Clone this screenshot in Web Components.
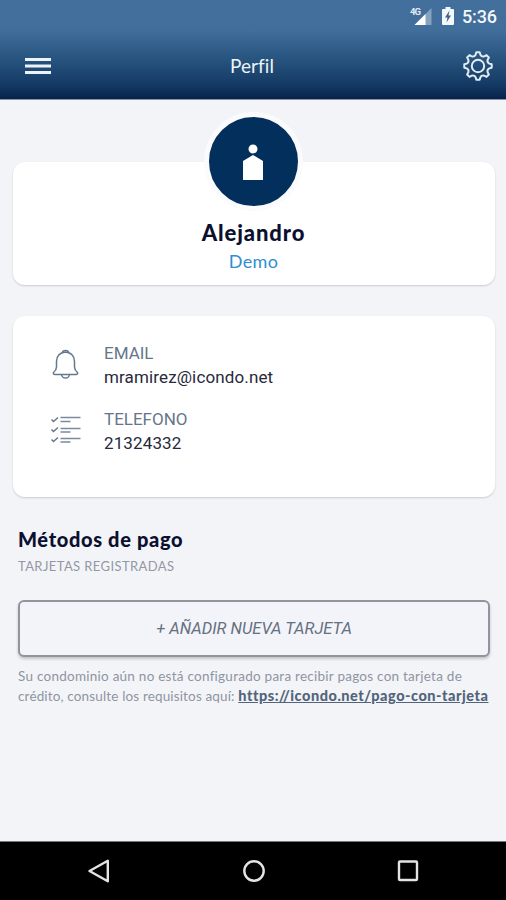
<!DOCTYPE html>
<html lang="es">
<head>
<meta charset="utf-8">
<title>Perfil</title>
<style>
  body {
    margin: 0;
    background: #f3f4f8;
    font-family: Lato, "Liberation Sans", sans-serif;
  }
</style>
</head>
<body>
<profile-page></profile-page>

<template id="status-bar">
  <style>
    :host {
      display: flex;
      justify-content: flex-end;
      height: 32px;
      padding-right: 9px;
      color: #f4f7fa;
      font: 500 18px/33px Roboto, sans-serif;
    }
    svg { display: block; flex: none; }
    .signal { margin-right: 9px; }
    .battery { margin-right: 8px; }
    .time { letter-spacing: -.1px; }
  </style>
  <svg class="signal" width="24" height="32" viewBox="0 0 24 32">
    <path d="M22.500 8V25H5.500z" fill="#85a2be"/>
    <path d="M16.500 14V25H5.500z" fill="#fff"/>
    <text x="1" y="15" font-family="Roboto" font-size="9.500" font-weight="700" fill="#e4ebf2" textLength="11">4G</text>
  </svg>
  <svg class="battery" width="12" height="32" viewBox="0 0 12 32">
    <path d="M3.500 7h5v2H11q1 0 1 1v14q0 1-1 1H1q-1 0-1-1V10q0-1 1-1h2.500z" fill="#f4f7fa"/>
    <path d="M7.500 10.500 3 17.500h2.500L4.500 22.500 9 15.500H6.500z" fill="#386490"/>
  </svg>
  <span class="time">5:36</span>
</template>

<template id="app-header">
  <style>
    :host {
      display: block;
      height: 100px;
      box-sizing: border-box;
      border-bottom: 1px solid #8e8ea6;
      background: linear-gradient(#426f9c 0, #416e9b 30px, #285580 58px, #143b65 84px, #0a2850 96px, #07214a 99px);
    }
    .bar {
      display: grid;
      grid-template-columns: 1fr auto 1fr;
      align-items: center;
      height: 68px;
      padding: 0 13px 0 25px;
      box-sizing: border-box;
    }
    .gear { justify-self: end; }
    svg { display: block; }
    h1 {
      margin: 0 14px 0 0;
      color: #eef3f8;
      font-size: 19px;
      font-weight: 400;
      line-height: 24px;
      letter-spacing: .1px;
    }
    .gear path, .gear circle { fill: none; stroke: #e3ebf2; stroke-width: 2; stroke-linejoin: round; }
  </style>
  <status-bar></status-bar>
  <div class="bar">
    <svg width="26" height="18" viewBox="0 0 26 18">
      <path d="M0 2.500h26M0 9h26M0 15.500h26" stroke="#eef2fa" stroke-width="2.800"/>
    </svg>
    <h1>Perfil</h1>
    <svg class="gear" width="30" height="32" viewBox="-15 -16 30 32">
      <path/>
      <circle r="6.200"/>
    </svg>
  </div>
</template>

<template id="ui-card">
  <style>
    :host {
      display: block;
      box-sizing: border-box;
      margin: 0 11px 0 13px;
      border-radius: 12px;
      background: #fff;
      box-shadow: 0 1px 2px rgba(0, 0, 0, .17);
    }
  </style>
  <slot></slot>
</template>

<template id="user-avatar">
  <style>
    :host {
      display: block;
      box-sizing: border-box;
      width: 99px;
      height: 99px;
      border: 5px solid #fbfbfd;
      border-radius: 50%;
      background: #032f5c;
    }
    svg { display: block; }
  </style>
  <svg width="89" height="89" viewBox="0 0 89 89">
    <circle cx="44" cy="32" r="4.500" fill="#fff"/>
    <path d="M44 38 54 44V63H34V44z" fill="#fff"/>
  </svg>
</template>

<template id="contact-row">
  <style>
    :host {
      display: grid;
      grid-template-columns: 54px 1fr;
      height: 66px;
      font-family: Roboto, sans-serif;
      font-size: 17px;
      line-height: 24px;
    }
    .label { color: #66768a; }
    .value { color: #28293b; letter-spacing: .13px; }
  </style>
  <slot name="icon"></slot>
  <div>
    <div class="label"><slot name="label"></slot></div>
    <div class="value"><slot></slot></div>
  </div>
</template>

<template id="add-button">
  <style>
    :host { display: block; }
    button {
      display: block;
      width: 100%;
      height: 57px;
      padding: 0;
      border: 2px solid #90949e;
      border-radius: 6px;
      background: #f3f4f9;
      box-shadow: 0 2px 3px rgba(0, 0, 0, .2);
      color: #667080;
      font: italic 400 16.500px/24px Roboto, sans-serif;
    }
  </style>
  <button><slot></slot></button>
</template>

<template id="nav-bar">
  <style>
    :host {
      display: grid;
      grid-template-columns: 1fr auto 1fr;
      align-items: center;
      box-sizing: border-box;
      height: 59px;
      padding: 0 86px 0 87px;
      border-top: 1px solid #777b7e;
      background: #000;
    }
    svg { display: block; fill: none; stroke: #e4e4e4; stroke-width: 2.400; }
    .recent { justify-self: end; }
  </style>
  <svg width="24" height="24" viewBox="0 0 24 24"><path d="M2.500 12 20.800 1.800V22.200z" stroke-linejoin="round"/></svg>
  <svg width="24" height="24" viewBox="0 0 24 24"><circle cx="12" cy="12" r="9.700"/></svg>
  <svg class="recent" width="24" height="24" viewBox="0 0 24 24"><rect x="3" y="2.500" width="18" height="18.500" rx="1"/></svg>
</template>

<template id="profile-page">
  <style>
    :host {
      display: flex;
      flex-direction: column;
      height: 900px;
      overflow: hidden;
    }
    app-header, nav-bar { flex: none; }
    main { flex: 1; }
    .user {
      display: flex;
      flex-direction: column;
      align-items: center;
      height: 123px;
      margin-top: 62px;
      padding-right: 1px;
    }
    user-avatar { margin: -50px 0 8px; flex: none; }
    .name {
      color: #0c1030;
      font-size: 22px;
      font-weight: 900;
      line-height: 28px;
      letter-spacing: .9px;
    }
    .role { color: #2f8ed2; font-size: 18px; line-height: 28px; letter-spacing: .3px; }
    .contact { height: 181px; margin-top: 31px; padding: 25px 0 0 37px; }
    .contact svg { display: block; fill: none; stroke: #66788e; stroke-width: 1.500; }
    .payments { padding: 28px 16px 0 18px; }
    h2 {
      margin: 0;
      color: #0c1030;
      font-size: 20px;
      font-weight: 900;
      line-height: 28px;
      letter-spacing: .65px;
    }
    .sub { color: #9298a4; font-size: 13px; line-height: 26px; letter-spacing: .4px; }
    add-button { margin-top: 21px; }
    p {
      margin: 9px 0 0;
      color: #8e95a2;
      font-size: 13.500px;
      line-height: 20px;
      white-space: nowrap;
    }
    p span { display: block; }
    .first { letter-spacing: .25px; }
    .second { letter-spacing: .15px; }
    a { color: #52647a; font-size: 14.500px; font-weight: 900; letter-spacing: .53px; }
  </style>
  <app-header></app-header>
  <main>
    <ui-card class="user">
      <user-avatar></user-avatar>
      <div class="name">Alejandro</div>
      <div class="role">Demo</div>
    </ui-card>
    <ui-card class="contact">
      <contact-row>
        <svg slot="icon" width="32" height="46" viewBox="0 0 32 46">
          <path d="M3.500 31.500Q6.500 29 6.500 26V20.500Q6.500 12 15.500 11 24.500 12 24.500 20.500V26Q24.500 29 27.500 31.500 28 33.500 26 33.500H5Q3 33.500 3.500 31.500z"/>
          <path d="M12.500 11.500Q12.500 9.500 15.500 9.500T18.500 11.500M11.500 33.500Q12 37 15.500 37T19.500 33.500"/>
        </svg>
        <span slot="label">EMAIL</span>mramirez@icondo.net
      </contact-row>
      <contact-row>
        <svg slot="icon" width="32" height="46" viewBox="0 0 32 46">
          <path d="M1.500 12.500 3.500 14.500 8 10.500M1.500 22.500 3.500 24.500 8 20.500M1.500 32.500 3.500 34.500 8 30.500"/>
          <path d="M10.500 10.500H30.500M10.500 14.500H20.500M10.500 21.500H30.500M10.500 25H20.500M10.500 31.500H30.500M10.500 35H20.500" stroke="#7b8b9d"/>
        </svg>
        <span slot="label">TELEFONO</span>21324332
      </contact-row>
    </ui-card>
    <section class="payments">
      <h2>Métodos de pago</h2>
      <div class="sub">TARJETAS REGISTRADAS</div>
      <add-button>+ AÑADIR NUEVA TARJETA</add-button>
      <p>
        <span class="first">Su condominio aún no está configurado para recibir pagos con tarjeta de</span>
        <span class="second">crédito, consulte los requisitos aquí: <a href="#">https://icondo.net/pago-con-tarjeta</a></span>
      </p>
    </section>
  </main>
  <nav-bar></nav-bar>
</template>

<script>
class TemplateElement extends HTMLElement {
  constructor() {
    super();
    const template = document.getElementById(this.localName);
    this.attachShadow({ mode: "open" }).appendChild(template.content.cloneNode(true));
  }
}

// point at the given angle (degrees, clockwise from the top)
function polar(angle, r) {
  const a = angle * Math.PI / 180;
  return `${(r * Math.sin(a)).toFixed(2)} ${(-r * Math.cos(a)).toFixed(2)}`;
}

function gearPath(teeth) {
  let d = "";
  for (let i = 0; i < teeth; i++) {
    const a = i * 360 / teeth;
    d += `${i ? "L" : "M"}${polar(a - 7, 13.8)}L${polar(a + 7, 13.8)}`;
    d += `L${polar(a + 12, 11.5)}Q${polar(a + 22.5, 9.6)} ${polar(a + 33, 11.5)}`;
  }
  return d + "z";
}

class AppHeader extends TemplateElement {
  connectedCallback() {
    this.shadowRoot.querySelector(".gear path").setAttribute("d", gearPath(8));
  }
}

customElements.define("app-header", AppHeader);

for (const name of ["status-bar", "ui-card", "user-avatar", "contact-row", "add-button", "nav-bar", "profile-page"]) {
  customElements.define(name, class extends TemplateElement {});
}
</script>
</body>
</html>
